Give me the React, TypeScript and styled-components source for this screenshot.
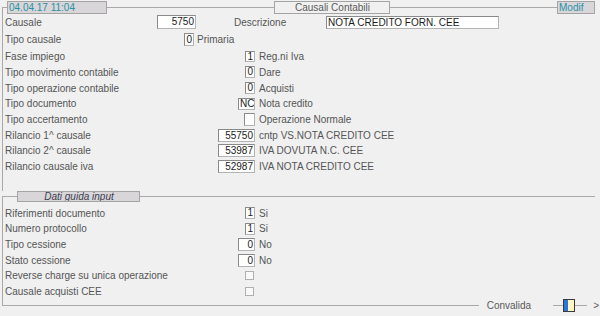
import React from 'react';
import styled, {createGlobalStyle} from 'styled-components';

const GlobalStyle = createGlobalStyle`
  html, body {
    margin: 0;
    padding: 0;
    background: #f0f0f0;
  }
  body {
    font-family: "Liberation Sans", Arial, sans-serif;
    font-size: 10px;
    color: #555;
  }
`;

const LINE = '#a9a9a9';

const Screen = styled.div`
  width: 600px;
  height: 316px;
  display: flex;
  flex-direction: column;
  overflow: hidden;
  background: #f0f0f0;
`;

const Bar = styled.div<{ $h: number }>`
  display: flex;
  align-items: center;
  height: ${p => p.$h}px;
  padding: 0 5px 0 2px;
  flex-shrink: 0;
`;

const Corner = styled.div<{ $w: number; $h: number }>`
  width: ${p => p.$w}px;
  height: ${p => p.$h}px;
  align-self: flex-end;
  box-sizing: border-box;
  border-top: 1px solid ${LINE};
  border-left: 1px solid ${LINE};
`;

const BottomCorner = styled.div<{ $h: number }>`
  flex: 1;
  height: ${p => p.$h}px;
  align-self: flex-start;
  box-sizing: border-box;
  border-bottom: 1px solid ${LINE};
  border-left: 1px solid ${LINE};
`;

const Rule = styled.div<{ $w?: number }>`
  height: 1px;
  background: ${LINE};
  ${p => (p.$w ? `width: ${p.$w}px;` : 'flex: 1;')}
`;

const Tag = styled.div<{ $w: number; $h: number; $dark?: boolean; $color: string; $center?: boolean; $italic?: boolean }>`
  width: ${p => p.$w}px;
  height: ${p => p.$h}px;
  box-sizing: border-box;
  border: 1px solid #a4a4a4;
  background: ${p => (p.$dark ? '#d8d6d8' : '#f0f0f0')};
  color: ${p => p.$color};
  font-style: ${p => (p.$italic ? 'italic' : 'normal')};
  text-align: ${p => (p.$center ? 'center' : 'left')};
  line-height: ${p => p.$h - 2}px;
  padding-left: 1px;
  white-space: nowrap;
  overflow: hidden;
`;

const Section = styled.div<{ $h: number; $pt?: number }>`
  height: ${p => p.$h}px;
  box-sizing: border-box;
  margin-left: 2px;
  padding: ${p => p.$pt || 0}px 0 0 2px;
  border-left: 1px solid ${LINE};
  flex-shrink: 0;
`;

const Row = styled.div<{ $h: number; $mt?: number }>`
  display: flex;
  align-items: center;
  height: ${p => p.$h}px;
  margin-top: ${p => p.$mt || 0}px;
  white-space: nowrap;
`;

const Field = styled.div<{ $w: number }>`
  display: flex;
  align-items: center;
  justify-content: space-between;
  width: ${p => p.$w}px;
  flex-shrink: 0;
`;

const Label = styled.span<{ $w?: number; $ml?: number }>`
  color: #555;
  ${p => (p.$w ? `width: ${p.$w}px;` : '')}
  margin-left: ${p => p.$ml || 0}px;
  flex-shrink: 0;
`;

const Box = styled.div<{ $w: number; $h: number; $left?: boolean }>`
  width: ${p => p.$w}px;
  height: ${p => p.$h}px;
  box-sizing: border-box;
  background: #fff;
  border: 1px solid #b4b4b4;
  border-top-color: #8a8a8a;
  border-left-color: #8a8a8a;
  color: #1c1c1c;
  line-height: ${p => p.$h - 2}px;
  text-align: ${p => (p.$left ? 'left' : 'right')};
  padding: 0 1px;
  overflow: hidden;
  flex-shrink: 0;
`;

const Check = styled.div`
  width: 9px;
  height: 9px;
  box-sizing: border-box;
  margin-right: 1px;
  border: 1px solid #b0b0b0;
  background: #f9f9f9;
`;

const Note = styled.span<{ $ml?: number }>`
  margin-left: ${p => p.$ml ?? 4}px;
  color: #555;
`;

const FooterText = styled.span<{ $ml: number; $mr: number }>`
  margin: 0 ${p => p.$mr}px 0 ${p => p.$ml}px;
  color: #5a5a5a;
`;

const Toggle = styled.div`
  width: 12px;
  height: 13px;
  box-sizing: border-box;
  border: 1px solid #3a3a3a;
  display: flex;
  span:first-child {
    width: 4px;
    background: #2a76dc;
  }
  span:last-child {
    flex: 1;
    background: #fff7c2;
  }
`;

type Line = { label: string; value?: string; w: number; h: number; note?: string; check?: boolean };

const mainRows: Line[] = [
  {label: 'Fase impiego', value: '1', w: 10, h: 11, note: 'Reg.ni Iva'},
  {label: 'Tipo movimento contabile', value: '0', w: 10, h: 12, note: 'Dare'},
  {label: 'Tipo operazione contabile', value: '0', w: 10, h: 12, note: 'Acquisti'},
  {label: 'Tipo documento', value: 'NC', w: 17, h: 12, note: 'Nota credito'},
  {label: 'Tipo accertamento', value: '', w: 11, h: 13, note: 'Operazione Normale'},
  {label: 'Rilancio 1^ causale', value: '55750', w: 37, h: 13, note: 'cntp VS.NOTA CREDITO CEE'},
  {label: 'Rilancio 2^ causale', value: '53987', w: 37, h: 13, note: 'IVA DOVUTA N.C. CEE'},
  {label: 'Rilancio causale iva', value: '52987', w: 37, h: 13, note: 'IVA NOTA CREDITO CEE'},
];

const inputRows: Line[] = [
  {label: 'Riferimenti documento', value: '1', w: 10, h: 12, note: 'Si'},
  {label: 'Numero protocollo', value: '1', w: 10, h: 12, note: 'Si'},
  {label: 'Tipo cessione', value: '0', w: 17, h: 13, note: 'No'},
  {label: 'Stato cessione', value: '0', w: 17, h: 13, note: 'No'},
  {label: 'Reverse charge su unica operazione', check: true, w: 9, h: 9},
  {label: 'Causale acquisti CEE', check: true, w: 9, h: 9},
];

const renderRow = (r: Line, h: number) => (
  <Row key={r.label} $h={h}>
    <Field $w={250}>
      <Label>{r.label}</Label>
      {r.check ? <Check/> : <Box $w={r.w} $h={r.h}>{r.value}</Box>}
    </Field>
    {r.note && <Note>{r.note}</Note>}
  </Row>
);

export default function App() {
  return (
    <Screen>
      <GlobalStyle/>
      <Bar $h={15}>
        <Corner $w={5} $h={8}/>
        <Tag $w={100} $h={13} $dark $color="#2b8fa6">04.04.17 11:04</Tag>
        <Rule/>
        <Tag $w={116} $h={13} $color="#5a5a5a" $center>Causali Contabili</Tag>
        <Rule/>
        <Tag $w={38} $h={13} $dark $color="#2b8fa6">Modif</Tag>
      </Bar>
      <Section $h={176}>
        <Row $h={14}>
          <Field $w={191}>
            <Label>Causale</Label>
            <Box $w={39} $h={14}>5750</Box>
          </Field>
          <Label $w={92} $ml={38}>Descrizione</Label>
          <Box $w={173} $h={13} $left>NOTA CREDITO FORN. CEE</Box>
        </Row>
        <Row $h={16} $mt={2}>
          <Field $w={189}>
            <Label>Tipo causale</Label>
            <Box $w={10} $h={13}>0</Box>
          </Field>
          <Note $ml={3}>Primaria</Note>
        </Row>
        <div style={{height: 1.85}}/>
        {mainRows.map(r => renderRow(r, 15.7))}
      </Section>
      <Bar $h={11}>
        <Corner $w={15} $h={6}/>
        <Tag $w={123} $h={11} $dark $color="#3d3d52" $center $italic>Dati guida input</Tag>
        <Rule/>
      </Bar>
      <Section $h={97} $pt={3.5}>
        {inputRows.map(r => renderRow(r, 15.6))}
      </Section>
      <Bar $h={13}>
        <BottomCorner $h={7}/>
        <FooterText $ml={8} $mr={22}>Convalida</FooterText>
        <Rule $w={10}/>
        <Toggle><span/><span/></Toggle>
        <Rule $w={12}/>
        <FooterText $ml={6} $mr={-4}>&gt;</FooterText>
      </Bar>
    </Screen>
  );
}
